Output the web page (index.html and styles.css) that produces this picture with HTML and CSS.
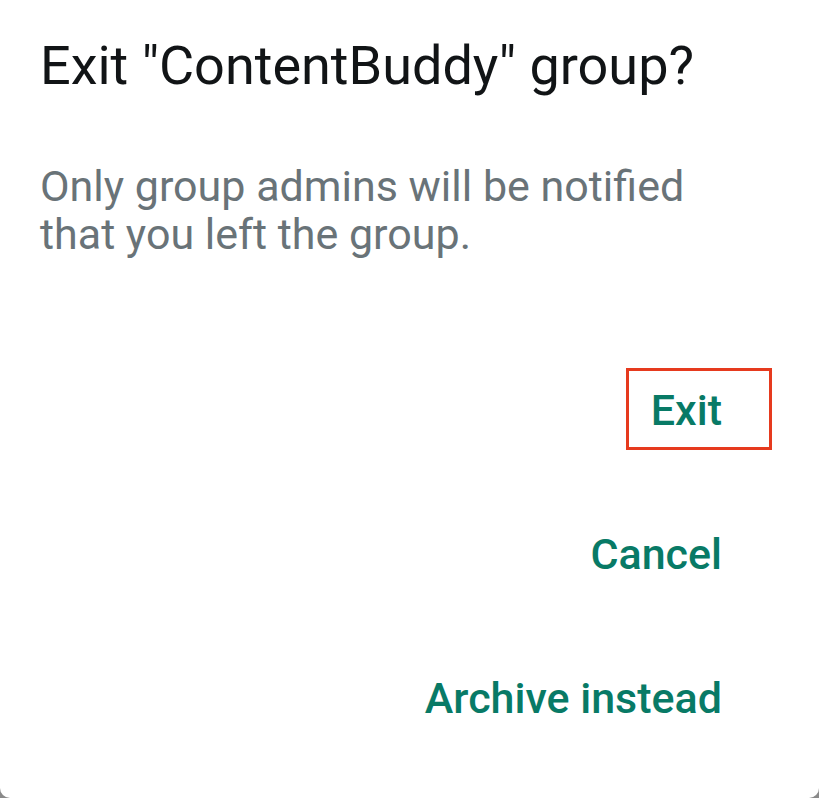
FILE: index.html
```html
<!DOCTYPE html>
<html lang="en">
<head>
<meta charset="utf-8">
<title>Exit group</title>
<link rel="stylesheet" href="styles.css">
</head>
<body>
<div class="dialog">
  <h1 class="title">Exit "ContentBuddy" group?</h1>
  <p class="message">Only group admins will be notified that you left the group.</p>
  <div class="actions">
    <button class="action action-highlight">Exit</button>
    <button class="action">Cancel</button>
    <button class="action">Archive instead</button>
  </div>
</div>
</body>
</html>
```

FILE: styles.css
```css
html, body {
  margin: 0;
  padding: 0;
  background: #8a8a8a;
}
body {
  width: 819px;
  height: 798px;
  overflow: hidden;
  font-family: Roboto, "Noto Sans", Arial, sans-serif;
}
.dialog {
  box-sizing: border-box;
  width: 819px;
  height: 798px;
  background: #ffffff;
  border-radius: 0 0 10px 10px;
  padding: 34px 97px 0 40px;
  display: flex;
  flex-direction: column;
}
.title {
  margin: 0;
  font-size: 54px;
  font-weight: 400;
  line-height: 64px;
  color: #111416;
  white-space: nowrap;
}
.message {
  margin: 64px 0 0 0;
  font-size: 43px;
  line-height: 48px;
  color: #697378;
  width: 680px;
}
.actions {
  margin-top: 128px;
  display: flex;
  flex-direction: column;
  align-items: flex-end;
  gap: 96px;
}
.action {
  position: relative;
  border: none;
  background: none;
  padding: 0;
  margin: 0;
  font-family: Roboto, "Noto Sans", Arial, sans-serif;
  font-size: 43px;
  font-weight: 500;
  line-height: 48px;
  color: #087a66;
}
.action-highlight::after {
  content: "";
  position: absolute;
  left: -25px;
  right: -50px;
  top: -18px;
  bottom: -16px;
  border: 3px solid #e63a1e;
}
```
